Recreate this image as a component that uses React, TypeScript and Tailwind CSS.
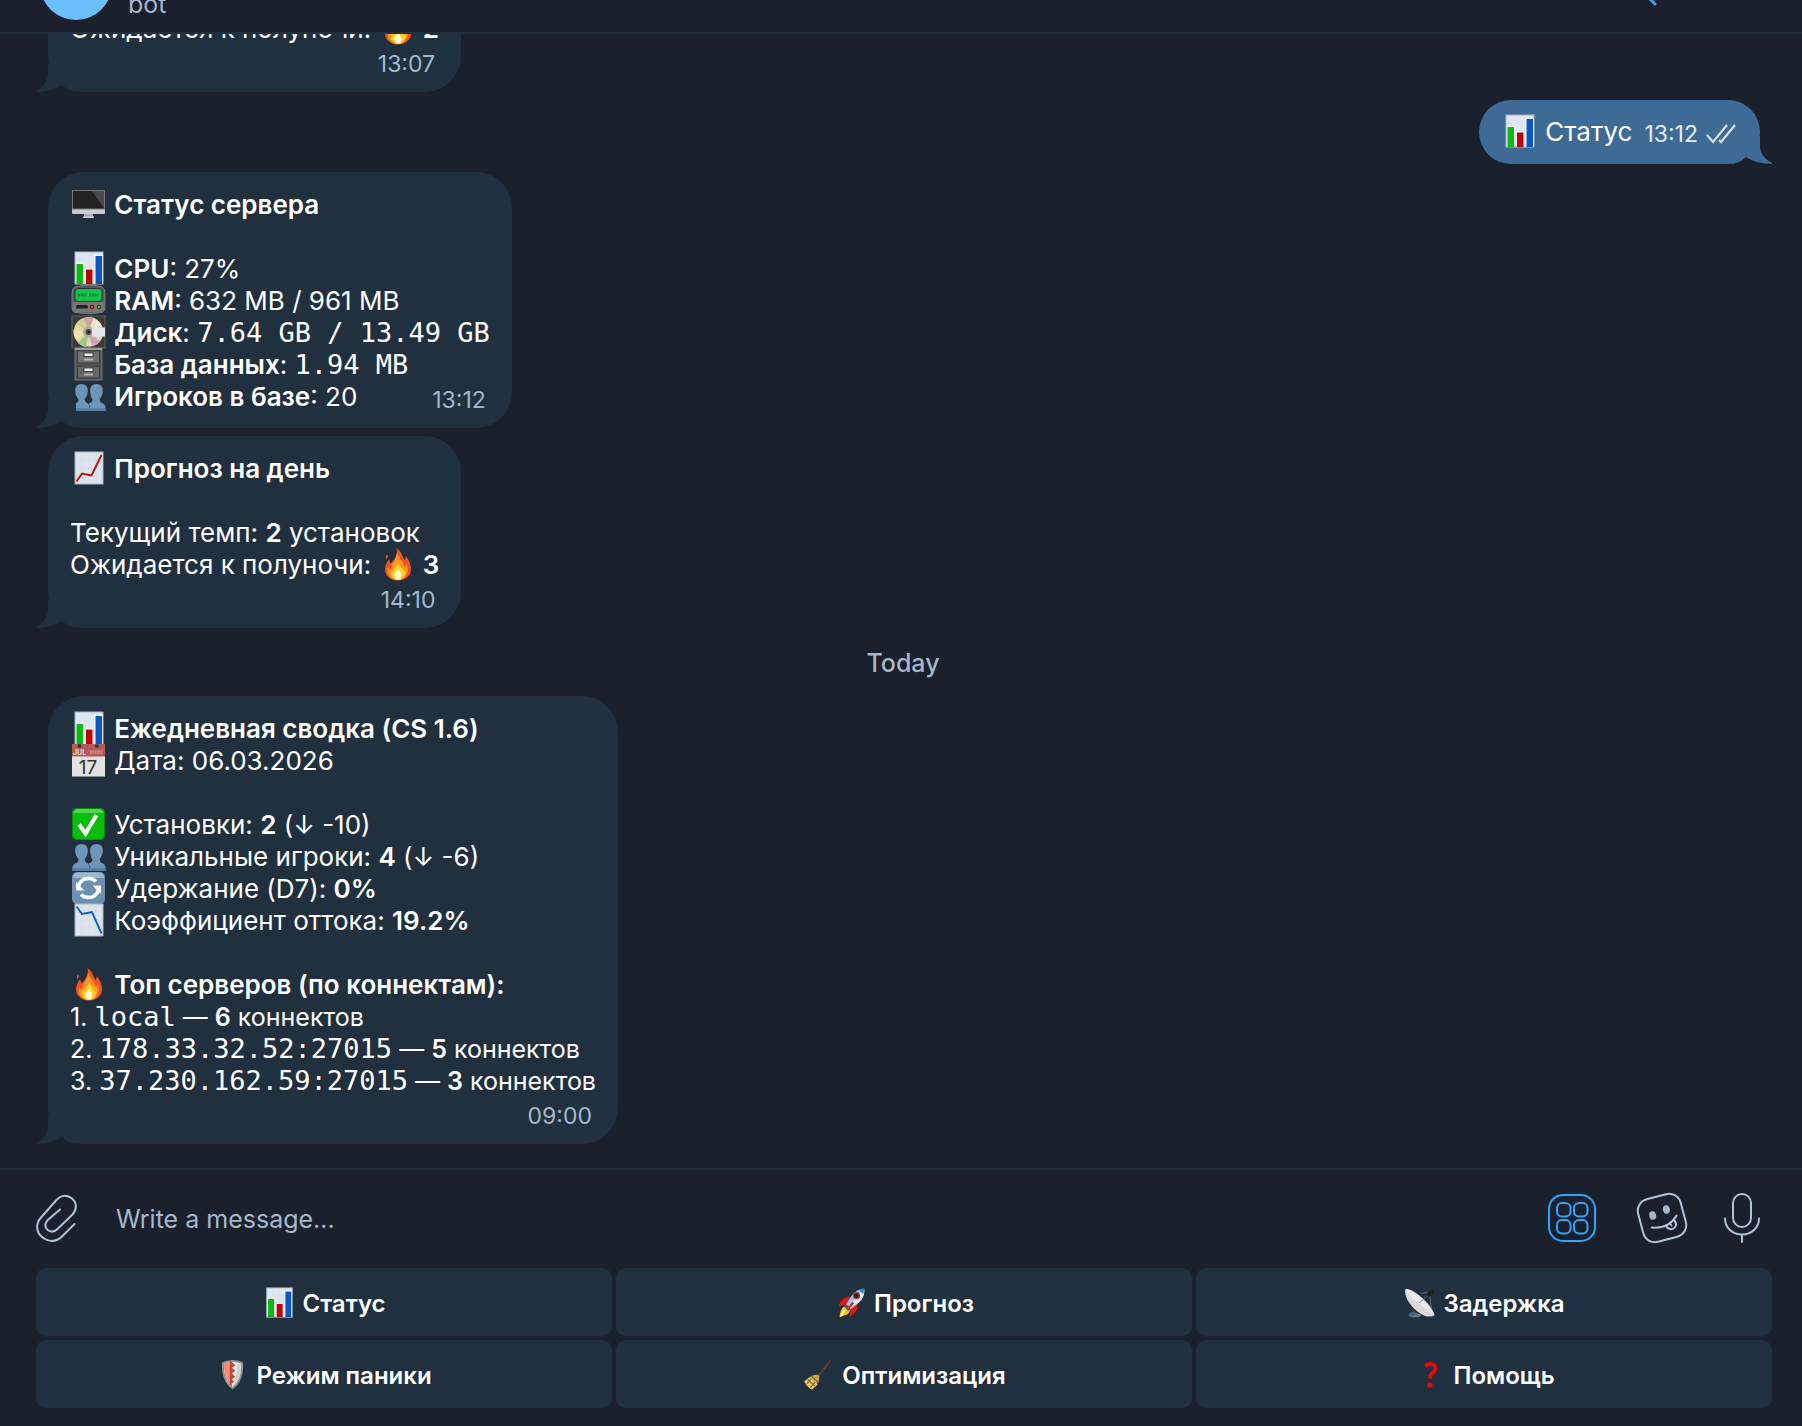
import { ReactNode } from 'react';

type EmojiName =
  | 'bars'
  | 'monitor'
  | 'pager'
  | 'disk'
  | 'cabinet'
  | 'people'
  | 'up'
  | 'down'
  | 'fire'
  | 'calendar'
  | 'check'
  | 'refresh'
  | 'rocket'
  | 'dish'
  | 'shield'
  | 'broom'
  | 'question';

// every drawing sits in a 37x34 cell
const drawings: Record<EmojiName, ReactNode> = {
  bars: (
    <>
      <rect x="5" y="1" width="28" height="32" fill="#dfe7f2" stroke="#a9b4c2" />
      <path d="M5 9h28M5 17h28M5 25h28M12 1v32M19 1v32M26 1v32" stroke="#d5deea" strokeWidth=".5" />
      <rect x="6" y="12" width="7.5" height="21" fill="#fff" />
      <rect x="15.5" y="17.5" width="7.5" height="15.5" fill="#fff" />
      <rect x="24.5" y="4" width="8" height="29" fill="#fff" />
      <rect x="6.5" y="13" width="6.5" height="20" fill="#0cb812" />
      <rect x="16" y="18.5" width="6.5" height="14.5" fill="#b80606" />
      <rect x="25.5" y="5" width="6.5" height="28" fill="#0a57c2" />
    </>
  ),
  monitor: (
    <>
      <path d="M14 24h9v7h-9z" fill="#a5a8ad" />
      <path d="M13 29.5h11v1.5H13z" fill="#d0d2d5" />
      <rect x="2" y="3" width="33" height="24" rx="1" fill="#c9ccd0" />
      <rect x="2.5" y="3.5" width="32" height="18.5" fill="#222" stroke="#777" />
      <path d="M22 4h12v17z" fill="#484848" />
    </>
  ),
  pager: (
    <>
      <path d="M5 4Q18 0 32 4q3 1 3 6v15q0 3-3 4.500Q18 32 5 29.500Q2 28 2 25V10q0-5 3-6z" fill="#595959" stroke="#8a8a8a" strokeWidth=".8" />
      <path d="M3 19h31v7q-1 3-4 3.500H7Q4 29 3 26z" fill="#777" />
      <rect x="5" y="5.500" width="27" height="13" rx="3" fill="#12c24a" stroke="#333" />
      <path d="M8 12h9M19 12h9" stroke="#0a8a32" strokeWidth="3" strokeDasharray="2 .8" />
      <rect x="6" y="22" width="12" height="3.500" rx="1.500" fill="#222" />
      <circle cx="22" cy="24" r="2.300" fill="#7a1717" />
      <circle cx="29" cy="24" r="2.300" fill="#145c1a" />
      <circle cx="22" cy="24" r="1" fill="#f04444" />
      <circle cx="29" cy="24" r="1" fill="#3fe04e" />
    </>
  ),
  disk: (
    <>
      <rect x="2" y="1" width="33" height="32" fill="#3a3936" stroke="#66645f" />
      <circle cx="18.500" cy="17" r="14.800" fill="#e3d9ac" />
      <path d="M18.500 17L6 9Q9 4 14 3z" fill="#c8d492" />
      <path d="M18.500 17L14 3q6-2 10 0z" fill="#cfa3ac" />
      <path d="M18.500 17L24 3q6 3 8 9z" fill="#efe7c9" />
      <path d="M18.500 17L8 28q4 4 8 4z" fill="#9fc98c" />
      <path d="M18.500 17L22 31q6-1 8-5z" fill="#cfa2bd" />
      <path d="M18.500 17L3.500 15q0 8 3 10z" fill="#f2e2a4" />
      <circle cx="18.500" cy="17" r="5.500" fill="#b5ae94" />
      <circle cx="18.500" cy="17" r="3" fill="#555" />
      <circle cx="18.500" cy="17" r="1.200" fill="#111" />
      <rect x="22" y="12.500" width="13" height="9" rx="1" fill="#e4e6ea" />
    </>
  ),
  cabinet: (
    <>
      <rect x="5" y="1" width="27" height="32" fill="#555" stroke="#777" />
      <rect x="5" y="1" width="27" height="2" fill="#9a9ca0" />
      <rect x="7.500" y="4" width="22" height="12" fill="#707173" stroke="#3b3b3b" />
      <rect x="7.500" y="19" width="22" height="12" fill="#666769" stroke="#3b3b3b" />
      <rect x="14" y="6" width="9" height="3.500" fill="#f1f1f1" stroke="#2d2d2d" strokeWidth=".8" />
      <rect x="14" y="21" width="9" height="3.500" fill="#f1f1f1" stroke="#2d2d2d" strokeWidth=".8" />
      <path d="M14 12.500h9M14 27.500h9" stroke="#b4b4b4" strokeWidth="2" />
    </>
  ),
  people: (
    <g fill="#6e94b9">
      <path d="M11.500 5c4.500 0 6.500 3 6.300 7-.1 4-1.600 6-3 7.800 0 2 .2 3 1.500 3.600 1.700.9 2.700 2 3 4V32H2.500v-3.500c.2-3 2-3.900 4-4.600 1.700-.6 2-2 1.900-4.100C6.800 18 5.300 16 5.200 12 5 8 7 5 11.500 5z" />
      <path d="M26.500 5c4.500 0 6.500 3 6.300 7-.1 4-1.600 6-3 7.800 0 2 .2 3.500 1.900 4.100 2 .7 3.600 1.600 3.800 4.600V32H19.800c0-4 .2-5.500-1.300-7 1-1.600 4-1.200 4-4.200C20.800 18 20.300 16 20.200 12c-.2-4 1.800-7 6.300-7z" />
      <path d="M2.500 29h32.900v3H2.500z" fill="#587da3" />
    </g>
  ),
  up: (
    <>
      <rect x="5" y="1" width="28" height="32" fill="#dde4ec" stroke="#a9b4c2" />
      <path d="M5 9h28M5 17h28M5 25h28M12 1v32M19 1v32M26 1v32" stroke="#d2dae4" strokeWidth=".5" />
      <path d="M6.500 30.500L12 22.500l9.500 2L31.500 4" fill="none" stroke="#b8100e" strokeWidth="1.900" />
    </>
  ),
  down: (
    <>
      <rect x="5" y="1" width="28" height="32" fill="#dde4ec" stroke="#a9b4c2" />
      <path d="M5 9h28M5 17h28M5 25h28M12 1v32M19 1v32M26 1v32" stroke="#d2dae4" strokeWidth=".5" />
      <path d="M6.500 3.500L12 11l10-2 9.500 21.500" fill="none" stroke="#1260bd" strokeWidth="1.900" />
    </>
  ),
  fire: (
    <>
      <path d="M17.500 1c6 4 5.500 9 8 12 1-1 1.300-2.300 1.200-4 3.500 3.500 5.300 9 5.300 13.500C32 29 26 33.500 19 33.500S6 29 6 22.500c0-5 2.500-7.500 3.500-10 1.200 1 1.800 2.500 1.900 4C16 12.500 19 7 17.500 1z" fill="#f4511e" />
      <path d="M8 7.500c1.800 1.500.7 3-.8 5-.6-1.900-.3-3.600.8-5z" fill="#e8502a" />
      <path d="M18 5c2 7 7 9 7.500 15 1.500-1 2-2.500 2-4 4 8-1 17-8.500 17S7.500 27 9 20c1 1.500 1.500 2 3 2.500C11.500 17 18 13 18 5z" fill="#ff9226" />
      <path d="M19 15c1 4 5.500 5.500 5.500 9.500.8-.6 1.200-1 1.500-2 1.500 6-2 10.500-7 10.500s-8-4.500-6.500-10.500c.7 1 1.200 1.500 2 2C14.500 20 19 19 19 15z" fill="#ffd21f" />
      <path d="M19 22c.8 2 3.500 3 3.500 6 0 2.500-1.500 4.500-3.500 4.500S15.300 30.500 15.300 28C15.300 25 18.500 24 19 22z" fill="#fffbd0" />
    </>
  ),
  calendar: (
    <>
      <rect x="2" y="1" width="33" height="32.500" fill="#e2e2e0" />
      <path d="M2 1h33v12.500H2z" fill="#b45a5b" />
      <circle cx="9.500" cy="3" r="2" fill="#2c3f51" />
      <circle cx="27" cy="3" r="2" fill="#2c3f51" />
      <text x="3" y="12" fontSize="7" fontWeight="700" fill="#ecd0d0" className="font-['Inter']">
        JUL
      </text>
      <path d="M20 9h13" stroke="#cd8787" strokeWidth="4" strokeDasharray="1 .6" />
      <text x="18" y="30.500" fontSize="19" textAnchor="middle" fontWeight="400" fill="#333" className="font-['Inter']">
        17
      </text>
    </>
  ),
  check: (
    <>
      <rect x="2" y="1" width="33" height="32" rx="5" fill="#09bd0b" />
      <path d="M3 6q1-4 5-4h21q4 0 5 4z" fill="#51d653" />
      <path d="M9 17.500l6.500 9L26.500 8" fill="none" stroke="#fff" strokeWidth="4" />
      <rect x="2.500" y="1.500" width="32" height="31" rx="5" fill="none" stroke="#078b0d" />
    </>
  ),
  refresh: (
    <>
      <rect x="2" y="1" width="33" height="32" rx="5" fill="#6d91b5" />
      <path d="M3 7q0-5 5-5.500h21q5 .5 5 5.500z" fill="#9fb8cf" />
      <path d="M8.500 15Q11 7.500 18.500 7.500q4.500 0 7.500 3M28.500 19Q26 26.500 18.500 26.500q-4.500 0-7.500-3" fill="none" stroke="#fff" strokeWidth="3.600" />
      <path d="M6 11v8.500h8.500zM31 23v-8.500h-8.500z" fill="#fff" />
    </>
  ),
  rocket: (
    <>
      <path d="M10 13q4-3 8-2l-4 8-9 2q1-5 5-8zM22 19l3-2q2 5-1 10l-7 6 1-8z" fill="#e11b0c" />
      <path d="M10 22l5-1 3 4-3 5-9 3q0-7 4-11z" fill="#ffb81f" />
      <path d="M10 25l4-1-5 8-3 1z" fill="#fff275" />
      <path d="M33 2q1 9-6 15l-9 7-5-5 6-9Q25 2 33 2z" fill="#9fc3e8" />
      <path d="M33 2q1 9-6 15l-9 7-2.500-2.500z" fill="#e6ebf0" />
      <path d="M33 2l-1 6-5-5q3-1.500 6-1z" fill="#3d82c4" />
      <path d="M13 19l5 5-2 2-5-5z" fill="#365d92" />
      <circle cx="24.500" cy="9.500" r="4" fill="#c73a30" />
      <circle cx="24.500" cy="9.500" r="2.600" fill="#201a1e" />
      <path d="M14 25l7-8" stroke="#c52c22" strokeWidth="2.400" />
    </>
  ),
  dish: (
    <>
      <path d="M8 20l8 3 2 8-11-1 3-4z" fill="#2e3032" />
      <ellipse cx="13" cy="31" rx="7" ry="2.300" fill="#6d747a" />
      <path d="M7 29l3-2 4 1-1 3-5 1z" fill="#3f6489" />
      <path d="M2.500 2.500C9-.5 33 20 34.500 31c-6 3.500-14 .5-22-7C5 17 1 8 2.500 2.500z" fill="#d9dbde" />
      <path d="M2.500 2.500C12 4 29 18 34.500 31 27 25 9 14 2.500 2.500z" fill="#f1f2f3" opacity=".7" />
      <path d="M18 17L29 8M19 7l9-1M31 24L29 8" stroke="#697480" strokeWidth="1" />
      <path d="M25.500 8l4-5 4.500 0-.5 4-5 4z" fill="#1d1f21" />
    </>
  ),
  shield: (
    <>
      <path d="M18 1q6 0 11.500 2.500Q31 24 18 33.500 5 24 6.500 3.500 12 1 18 1z" fill="#8a8d90" />
      <path d="M18 3q5 0 9.500 2Q28.500 22 18 31 7.500 22 8.500 5 13 3 18 3z" fill="#ececec" />
      <path d="M17 3Q12 3 8.500 5 7.500 22 18 31l-1-4z" fill="#f98b7a" />
      <path d="M15 3h2l4 4-4 2.500 4 3.500-4 3 4 3.500-4 3 3 2.500-3 1.500v3l-2-2z" fill="#c94132" />
      <path d="M27.500 5Q28.500 22 18 31q5-9 5-27.500z" fill="#c4c5c7" opacity=".7" />
    </>
  ),
  broom: (
    <>
      <path d="M18 18L31.500 1.500" stroke="#74412f" strokeWidth="1.700" />
      <path d="M11 18l6-1 2 2-1 6-7 8.500Q5 31 2.500 24.500z" fill="#c8a64c" />
      <path d="M8 20l9 8-6 5.500Q5 31 2.500 24.500z" fill="#e4ca77" />
      <path d="M10 18.500l8 7.500M6 22.500l8 7M5 27.500l5-6M9 31.500l5-6" stroke="#876524" strokeWidth="1.300" />
    </>
  ),
  question: (
    <>
      <path d="M13 7.500Q18 4 22.500 6.500c4.500 3 .5 7.500-2.500 10-1 1-1.500 2-1.500 5" fill="none" stroke="#e80b08" strokeWidth="4.200" />
      <circle cx="18.300" cy="28.500" r="3" fill="#e80b08" />
    </>
  ),
};

const Emoji = ({ name, small }: { name: EmojiName; small?: boolean }) => (
  <svg
    viewBox="0 0 37 34"
    aria-hidden="true"
    className={
      small
        ? 'inline-block h-[31px] w-[34px] -my-1 align-[-2px]'
        : 'inline-block h-[34px] w-[37px] -my-1 align-[-3px]'
    }
  >
    {drawings[name]}
  </svg>
);

const B = ({ children }: { children: ReactNode }) => (
  <b className="font-semibold">{children}</b>
);

const Mono = ({ children }: { children: ReactNode }) => (
  <code className="font-['DejaVu_Sans_Mono',monospace] text-[27px] leading-none">{children}</code>
);

const Gap = () => <div className="h-8" />;

interface BubbleProps {
  time: string;
  last?: ReactNode;
  children?: ReactNode;
}

// `last` is the line that shares its row with the time
const Bubble = ({ time, last, children }: BubbleProps) => (
  <article className="relative ml-12 w-fit shrink-0 rounded-[36px] bg-[#21303f] px-[22px] pt-[17px] pb-[15px] text-[26px]">
    <svg viewBox="0 0 40 28" className="absolute bottom-0 -left-3 h-7 w-10 text-[#21303f]" aria-hidden="true">
      <path d="M12 0v12Q10 22 0 27v1q16 0 26-7l14-5V0z" fill="currentColor" />
      <path d="M26 21q8 7 14 7H10q10-2 16-7z" fill="#1a202c" />
      <path d="M26 21q7 6 14 7V14z" fill="currentColor" />
    </svg>
    {children}
    <div className="flex h-8 items-end justify-between gap-16 whitespace-nowrap">
      <div>{last}</div>
      <time className="pr-1 text-[23px] leading-[26px] text-[#a5b8cb]">{time}</time>
    </div>
  </article>
);

const keyboard: { icon: EmojiName; label: string }[] = [
  { icon: 'bars', label: 'Статус' },
  { icon: 'rocket', label: 'Прогноз' },
  { icon: 'dish', label: 'Задержка' },
  { icon: 'shield', label: 'Режим паники' },
  { icon: 'broom', label: 'Оптимизация' },
  { icon: 'question', label: 'Помощь' },
];

const topServers = [
  { address: 'local', connects: 6 },
  { address: '178.33.32.52:27015', connects: 5 },
  { address: '37.230.162.59:27015', connects: 3 },
];

export default function App() {
  return (
    <div className="flex h-screen flex-col overflow-hidden bg-[#1a202c] font-['Inter',sans-serif] text-[25px] leading-8 text-white">
      <header className="flex h-[34px] shrink-0 items-end justify-between overflow-hidden border-b-2 border-[#21303f] pr-[143px] pl-10">
        <div className="flex items-end gap-4">
          <div className="mb-3 size-[72px] shrink-0 rounded-full bg-[#6abfff]" />
          <span className="mb-3 text-[#a5b8cb]">bot</span>
        </div>
        <button aria-label="Search" className="mb-6">
          <svg viewBox="0 0 40 40" className="size-10" fill="none" stroke="#2ea6ff" strokeWidth="3" strokeLinecap="round">
            <circle cx="16" cy="16" r="13" />
            <path d="M26 26l10 10" />
          </svg>
        </button>
      </header>

      <main className="flex min-h-0 flex-1 flex-col justify-end gap-2 overflow-hidden pb-6 whitespace-nowrap">
        <Bubble time="13:07">
          <Gap />
          <p>
            Ожидается к полуночи: <Emoji name="fire" /> <B>2</B>
          </p>
        </Bubble>

        <article className="relative mr-[42px] flex h-16 w-fit shrink-0 items-center self-end rounded-full bg-[#3e6a96] pr-6 pl-[22px] text-[26px]">
          <svg viewBox="0 0 40 28" className="absolute -right-3 bottom-0 h-7 w-10 text-[#3e6a96]" aria-hidden="true">
            <path d="M28 0v12q2 10 12 15v1q-16 0-26-7L0 24V0z" fill="currentColor" />
            <path d="M14 21q-8 7-14 7h30q-10-2-16-7z" fill="#1a202c" />
            <path d="M14 21q-7 6-14 7V14z" fill="currentColor" />
          </svg>
          <span>
            <Emoji name="bars" /> Статус
          </span>
          <time className="relative pt-1 pl-3 text-[23px] text-[#e3edf6]">13:12</time>
          <svg viewBox="0 0 30 20" className="relative mt-1 ml-2 h-5 w-[30px]" fill="none" stroke="#d5e2ee" strokeWidth="2.200" aria-label="Read">
            <path d="M1 11l6 7L21 1M13 16l2 2L29 1" />
          </svg>
        </article>

        <Bubble
          time="13:12"
          last={
            <>
              <Emoji name="people" /> <B>Игроков в базе</B>: 20
            </>
          }
        >
          <p>
            <Emoji name="monitor" /> <B>Статус сервера</B>
          </p>
          <Gap />
          <p>
            <Emoji name="bars" /> <B>CPU</B>: 27%
          </p>
          <p>
            <Emoji name="pager" /> <B>RAM</B>: 632 MB / 961 MB
          </p>
          <p>
            <Emoji name="disk" /> <B>Диск</B>: <Mono>7.64 GB / 13.49 GB</Mono>
          </p>
          <p>
            <Emoji name="cabinet" /> <B>База данных</B>: <Mono>1.94 MB</Mono>
          </p>
        </Bubble>

        <Bubble time="14:10">
          <p>
            <Emoji name="up" /> <B>Прогноз на день</B>
          </p>
          <Gap />
          <p>
            Текущий темп: <B>2</B> установок
          </p>
          <p>
            Ожидается к полуночи: <Emoji name="fire" /> <B>3</B>
          </p>
        </Bubble>

        <div className="pt-[11px] pb-[9px] pl-1 text-center font-medium text-[#a5b8cb]">Today</div>

        <Bubble time="09:00">
          <p>
            <Emoji name="bars" /> <B>Ежедневная сводка (CS 1.6)</B>
          </p>
          <p>
            <Emoji name="calendar" /> Дата: 06.03.2026
          </p>
          <Gap />
          <p>
            <Emoji name="check" /> Установки: <B>2</B> (↓ -10)
          </p>
          <p>
            <Emoji name="people" /> Уникальные игроки: <B>4</B> (↓ -6)
          </p>
          <p>
            <Emoji name="refresh" /> Удержание (D7): <B>0%</B>
          </p>
          <p>
            <Emoji name="down" /> Коэффициент оттока: <B>19.2%</B>
          </p>
          <Gap />
          <p>
            <Emoji name="fire" /> <B>Топ серверов (по коннектам):</B>
          </p>
          <div className="text-[25px]">
            {topServers.map(({ address, connects }, idx) => (
              <p key={address}>
                {idx + 1}. <Mono>{address}</Mono> — <B>{connects}</B> коннектов
              </p>
            ))}
          </div>
        </Bubble>
      </main>

      <footer className="shrink-0 border-t-2 border-[#21303f] pr-[30px] pb-[18px] pl-9">
        <div className="flex h-[98px] items-center pr-3 pb-0.5 text-[#b0c4d8]">
          <button aria-label="Attach">
            <svg viewBox="0 0 42 48" className="h-12 w-[42px]" fill="none" stroke="currentColor" strokeWidth="2" strokeLinecap="round">
              <path d="M38.500 30L26 42.500C20 48.500 12 48 6 43S-.5 29.500 5 23.500L20 6.500C25 1 31 .5 36 4.500s5 11 .5 16L21.500 35c-3.500 3.300-7 3.300-10 .8s-2.800-6.300 0-9.500L24 15.500" />
            </svg>
          </button>
          <input
            aria-label="Write a message"
            placeholder="Write a message..."
            className="ml-[38px] min-w-0 flex-1 bg-transparent pt-0.5 outline-none placeholder:text-[#a5b8cb]"
          />
          <button aria-label="Bot keyboard" className="text-[#2ea6ff]">
            <svg viewBox="0 0 48 48" className="size-12" fill="none" stroke="currentColor" strokeWidth="2">
              <rect x="1" y="1" width="46" height="46" rx="14" />
              <rect x="9" y="9" width="13.500" height="13.500" rx="5" />
              <rect x="26" y="9" width="13.500" height="13.500" rx="5" />
              <rect x="9" y="26" width="13.500" height="13.500" rx="5" />
              <rect x="26" y="26" width="13.500" height="13.500" rx="5" />
            </svg>
          </button>
          <button aria-label="Stickers" className="ml-10">
            <svg viewBox="0 0 52 52" className="size-[52px]" fill="none" stroke="currentColor" strokeWidth="2" strokeLinecap="round">
              <rect x="4" y="4" width="44" height="44" rx="12" transform="rotate(-15 26 26)" />
              <g fill="#a5b8cb" stroke="none">
                <ellipse cx="16.700" cy="23.500" rx="3.400" ry="4.300" transform="rotate(-15 16.700 23.500)" />
                <ellipse cx="30.400" cy="17.500" rx="3.400" ry="4.300" transform="rotate(-15 30.400 17.500)" />
              </g>
              <path d="M15.700 35.500Q33 37 40.500 23.500" />
              <path d="M30 33.500c1.500 4.500 6.500 4.500 8.800 1.800 2.200-2.500 1.200-5-.8-7.300M34 31.500l1.500 2" />
            </svg>
          </button>
          <button aria-label="Record voice message" className="ml-9">
            <svg viewBox="0 0 36 50" className="h-[50px] w-9" fill="none" stroke="currentColor" strokeWidth="2" strokeLinecap="round">
              <rect x="9" y="1" width="18" height="33" rx="9" />
              <path d="M1 25.500C1 35 8.500 41.500 18 41.500S35 35 35 25.500M18 41.500V49" />
            </svg>
          </button>
        </div>

        <div className="grid grid-cols-3 gap-1">
          {keyboard.map(({ icon, label }) => (
            <button key={label} className="h-[68px] rounded-[10px] bg-[#21303f] pt-1 text-2xl font-semibold">
              <Emoji name={icon} small /> {label}
            </button>
          ))}
        </div>
      </footer>
    </div>
  );
}
